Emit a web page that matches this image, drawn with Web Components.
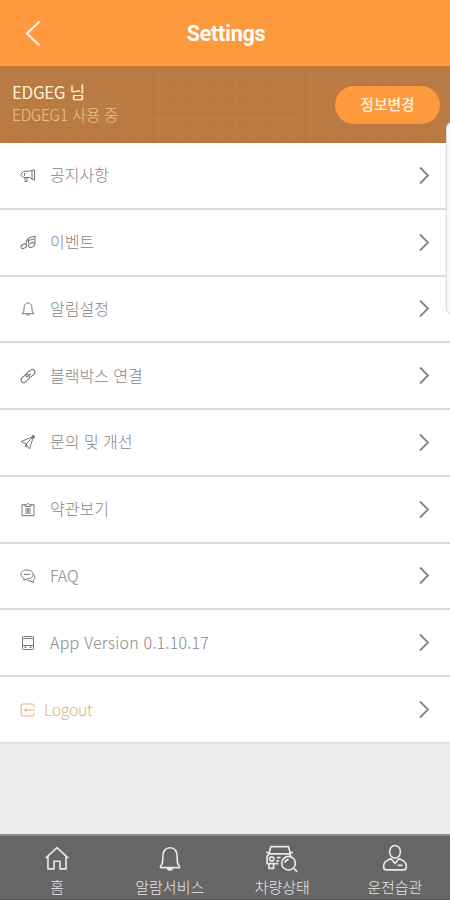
<!DOCTYPE html>
<html lang="ko">
<head>
<meta charset="utf-8">
<title>Settings</title>
<style>
html,body{margin:0;padding:0}
body{width:450px;height:900px;overflow:hidden;background:#ececec;font-family:"Noto Sans CJK KR","Noto Sans",sans-serif}
</style>
</head>
<body>
<settings-app></settings-app>
<script>
const ICONS = {
  horn: '<path d="M1 7 3.8 4.200H9.500l5-1.500v10.500L9.500 10.500H3.800L1 8.500zM12 3.500v9M5 10.500v4h2v-4M4.500 6v3"/>',
  music: '<path d="M6.200 11.500V6.800l2-2.600L15 2v8M7 6.800l7.800-2M8.500 4.300v5"/><ellipse cx="3.800" cy="12.200" rx="3" ry="2" transform="rotate(-30 3.800 12.200)"/><ellipse cx="11.600" cy="11" rx="3.200" ry="2.200" transform="rotate(-30 11.600 11)"/>',
  bell: '<path d="M2 12.700c1.700-1 2-2.200 2-4.700C4 4.300 5.300 2 8 2s4 2.300 4 6c0 2.500.3 3.700 2 4.700zM6.500 13.200c.5 1.400 2.500 1.400 3 0"/>',
  link: '<g transform="rotate(-43 8 8)"><rect x="-.5" y="5.300" width="9.600" height="5.400" rx="2.700"/><path d="M9.100 10.700h4.700a2.700 2.700 0 0 0 0-5.400H8.500Q6.500 5.300 6.500 8h5"/></g>',
  plane: '<path d="M1 7.500 13.500 2.500 9.500 15 6 10zM6 10 13 3M6 10l-.3 3 1.800-1.300"/><circle cx="13.200" cy="2.800" r="1.300" fill="currentColor"/>',
  clip: '<path d="M5 3.700H2v11h12v-11H11M5 5.400V3.700h1.500L8 2.200l1.500 1.500H11v1.700zM5 8h6M5 10h6M5 12h6M8 7v5.500"/>',
  chat: '<path d="M7 2c3.700 0 6 1.700 6 4.400s-2.300 4.400-6 4.400l-3.200 1.500.2-2.200C2 9.300 1 8 1 6.400 1 3.700 3.300 2 7 2zM3.800 6.400h6.400M13.300 6.200c2.300 1.900 2 4.500 0 5.900v2.700L11 13c-2 .2-3.300-.2-4.300-1.300"/>',
  device: '<path d="M3.300 1.500h9.400q.8 0 .8.800v11.400q0 .8-.8.800H3.300q-.8 0-.8-.8V2.300q0-.8.8-.8zM2.500 3.500h11M2.500 10.500h11M5 10.500v2h1.500M9.500 12.500H11v-2"/>',
  exit: '<path d="M14 5V3.800Q14 2 12.200 2h-9Q1.200 2 1.200 3.800v8.400q0 1.800 2 1.800h9q1.800 0 1.800-1.800V11M15 8H4.500M7.300 5.300 4.500 8l2.800 2.700"/>',
  home: '<path d="M3 14.500 15.500 3 28 14.500M5.500 13v13.500h6.700V18h6.600v8.500h6.700V13"/>',
  alarm: '<path d="M5 23.500c2.500-2 2.500-4.500 2.500-9.500C7.500 7 10.300 3 15.500 3s8 4 8 11c0 5 0 7.500 2.500 9.500v1.500H5z"/><path d="M12.500 25.300c.7 3.200 5.300 3.200 6 0z" fill="currentColor"/>',
  car: '<path d="M4 9.500 6 1.800h19l2 7.700M1 8h3M27 8h3M4 9.500h23v4M4 9.500 2 12v8h12M4 20v5h5v-5M12.500 13.500h4M12 17h3"/><circle cx="7" cy="15" r="2.300"/><circle cx="25" cy="19.500" r="7.300"/><path d="m30.300 24.800 4 4M21 19q.8-3 4-3.300"/>',
  driver: '<ellipse cx="15.500" cy="7.500" rx="6" ry="7"/><path d="M11 15 8 16.500q-5 2-5 6.500v2q0 2.500 3 2.500h19q3 0 3-2.500v-2q0-4.500-5-6.500L20 15M11 15l4.500 5.500L20 15M18.500 22.500H24"/>',
};
function define(name, template, setup) {
  customElements.define(name, class extends HTMLElement {
    constructor() {
      super();
      this.attachShadow({mode: 'open'});
    }
    connectedCallback() {
      this.shadowRoot.innerHTML = template;
      if (setup) setup(this, this.shadowRoot);
    }
  });
}

define('line-icon', `<style>:host{display:block;flex:none}svg{display:block;width:100%;height:100%;fill:none;stroke:currentColor;stroke-linejoin:round;overflow:visible}</style><svg></svg>`, (el, root) => {
  const svg = root.querySelector('svg');
  svg.setAttribute('viewBox', el.getAttribute('box') || '0 0 16 16');
  svg.setAttribute('stroke-width', el.getAttribute('weight') || '1');
  svg.innerHTML = ICONS[el.getAttribute('name')];
});

define('title-bar', `<style>
:host{display:grid;grid-template-columns:66px 1fr 66px;align-items:center;height:66px;background:#ff993e;color:#fff;box-sizing:border-box}
svg{width:16px;height:27px;margin-left:25px;fill:none;stroke:#fff6e8;stroke-width:2.200}
h1{margin:0;text-align:center;font:700 21.500px/30px Roboto,sans-serif;padding:1px 0 0 2px;letter-spacing:-.22px}
</style><svg viewBox="0 0 16 27"><path d="M14.500 1.500 2 13.500l12.500 12"/></svg><h1><slot></slot></h1>`);

define('profile-bar', `<style>
:host{display:flex;align-items:center;justify-content:space-between;height:77px;padding:0 10px 0 12px;box-sizing:border-box;color:#fff0d7;border-top:1px solid #c77c3b;border-bottom:1px solid #b5763e;
background:linear-gradient(90deg,#b97b4390,#b97b4300 50%,#b97b4390),repeating-linear-gradient(90deg,#a9693138 0 1px,transparent 1px 7px,#d1955530 7px 8px,transparent 8px 19px),repeating-linear-gradient(0deg,#a9693130 0 1px,transparent 1px 9px,#d1955530 9px 10px,transparent 10px 14px),#b97b43}
.who{display:grid;grid-template-rows:23px 22px;margin-top:-4px}
.name{font-size:17px;line-height:23px;letter-spacing:-.4px}
.state{font-size:15.500px;line-height:22px;color:#ecc397;font-weight:300;letter-spacing:-.25px}
button{font:500 14.800px/20px "Noto Sans CJK KR",sans-serif;width:105px;height:38px;border:0;border-radius:19px;background:#ff993e;color:#fff4df;padding:0 0 1px}
</style><div class="who"><div class="name"><slot name="name"></slot></div><div class="state"><slot name="state"></slot></div></div><button><slot name="action"></slot></button>`);

define('setting-row', `<style>
:host{display:flex;align-items:center;height:66.780px;box-sizing:border-box;padding:0 20px;background:#fff;border-bottom:2px solid #dadada;color:#858585;font-size:16px;font-weight:300}
line-icon{width:16px;height:16px;color:#777}
.label{flex:1;margin:-1px 0 1px 14px;line-height:24px;white-space:nowrap;letter-spacing:var(--track,0)}
.go{width:12px;height:19px;fill:none;stroke:#848484;stroke-width:1.800}
:host([accent]){color:#e0b678}
:host([accent]) line-icon{color:#dfac68}
:host([accent]) .label{margin-left:8px}
:host(:last-child){border-color:#e2e2e2}
</style><line-icon></line-icon><span class="label"><slot></slot></span><svg class="go" viewBox="0 0 12 19"><path d="m2 1.500 8 8-8 8"/></svg>`, (el, root) => {
  const icon = root.querySelector('line-icon');
  const fresh = document.createElement('line-icon');
  fresh.setAttribute('name', el.getAttribute('icon'));
  icon.replaceWith(fresh);
});

define('nav-item', `<style>
:host{display:flex;flex-direction:column;align-items:center;color:#e9e9e9;font-size:15px;font-weight:300;line-height:20px;padding:9px 0 0 2px}
line-icon{width:28px;height:28px}
:host([icon=car]) line-icon{width:34px}
.t{margin-top:4px;white-space:nowrap;letter-spacing:0}
</style><div class="i"></div><span class="t"><slot></slot></span>`, (el, root) => {
  const name = el.getAttribute('icon');
  const icon = document.createElement('line-icon');
  icon.setAttribute('name', name);
  icon.setAttribute('box', name === 'car' ? '0 0 36 30' : '0 0 31 31');
  icon.setAttribute('weight', '1.8');
  root.querySelector('.i').replaceWith(icon);
});

define('edge-handle', `<style>:host{position:absolute;left:446px;top:122px;width:12px;height:192px;box-sizing:border-box;background:#f8f8f8;border:1px solid #dedede;border-radius:7px;box-shadow:0 0 2px #0002}</style>`);

define('settings-app', `<style>
:host{display:flex;flex-direction:column;position:relative;width:450px;height:900px;overflow:hidden;background:#ececec}
main{flex:1}
nav{display:grid;grid-template-columns:repeat(4,1fr);height:66px;box-sizing:border-box;background:#666;border-top:2px solid #8b8b8b;border-bottom:1px solid #595959}
</style>
<title-bar>Settings</title-bar>
<profile-bar><span slot="name">EDGEG 님</span><span slot="state">EDGEG1 사용 중</span><span slot="action">정보변경</span></profile-bar>
<main>
<setting-row icon="horn">공지사항</setting-row>
<setting-row icon="music">이벤트</setting-row>
<setting-row icon="bell">알림설정</setting-row>
<setting-row icon="link">블랙박스 연결</setting-row>
<setting-row icon="plane">문의 및 개선</setting-row>
<setting-row icon="clip">약관보기</setting-row>
<setting-row icon="chat">FAQ</setting-row>
<setting-row icon="device" style="--track:.22px">App Version 0.1.10.17</setting-row>
<setting-row icon="exit" accent style="--track:-.4px">Logout</setting-row>
</main>
<nav><nav-item icon="home">홈</nav-item><nav-item icon="alarm">알람서비스</nav-item><nav-item icon="car">차량상태</nav-item><nav-item icon="driver">운전습관</nav-item></nav>
<edge-handle></edge-handle>`);
</script>
</body>
</html>
